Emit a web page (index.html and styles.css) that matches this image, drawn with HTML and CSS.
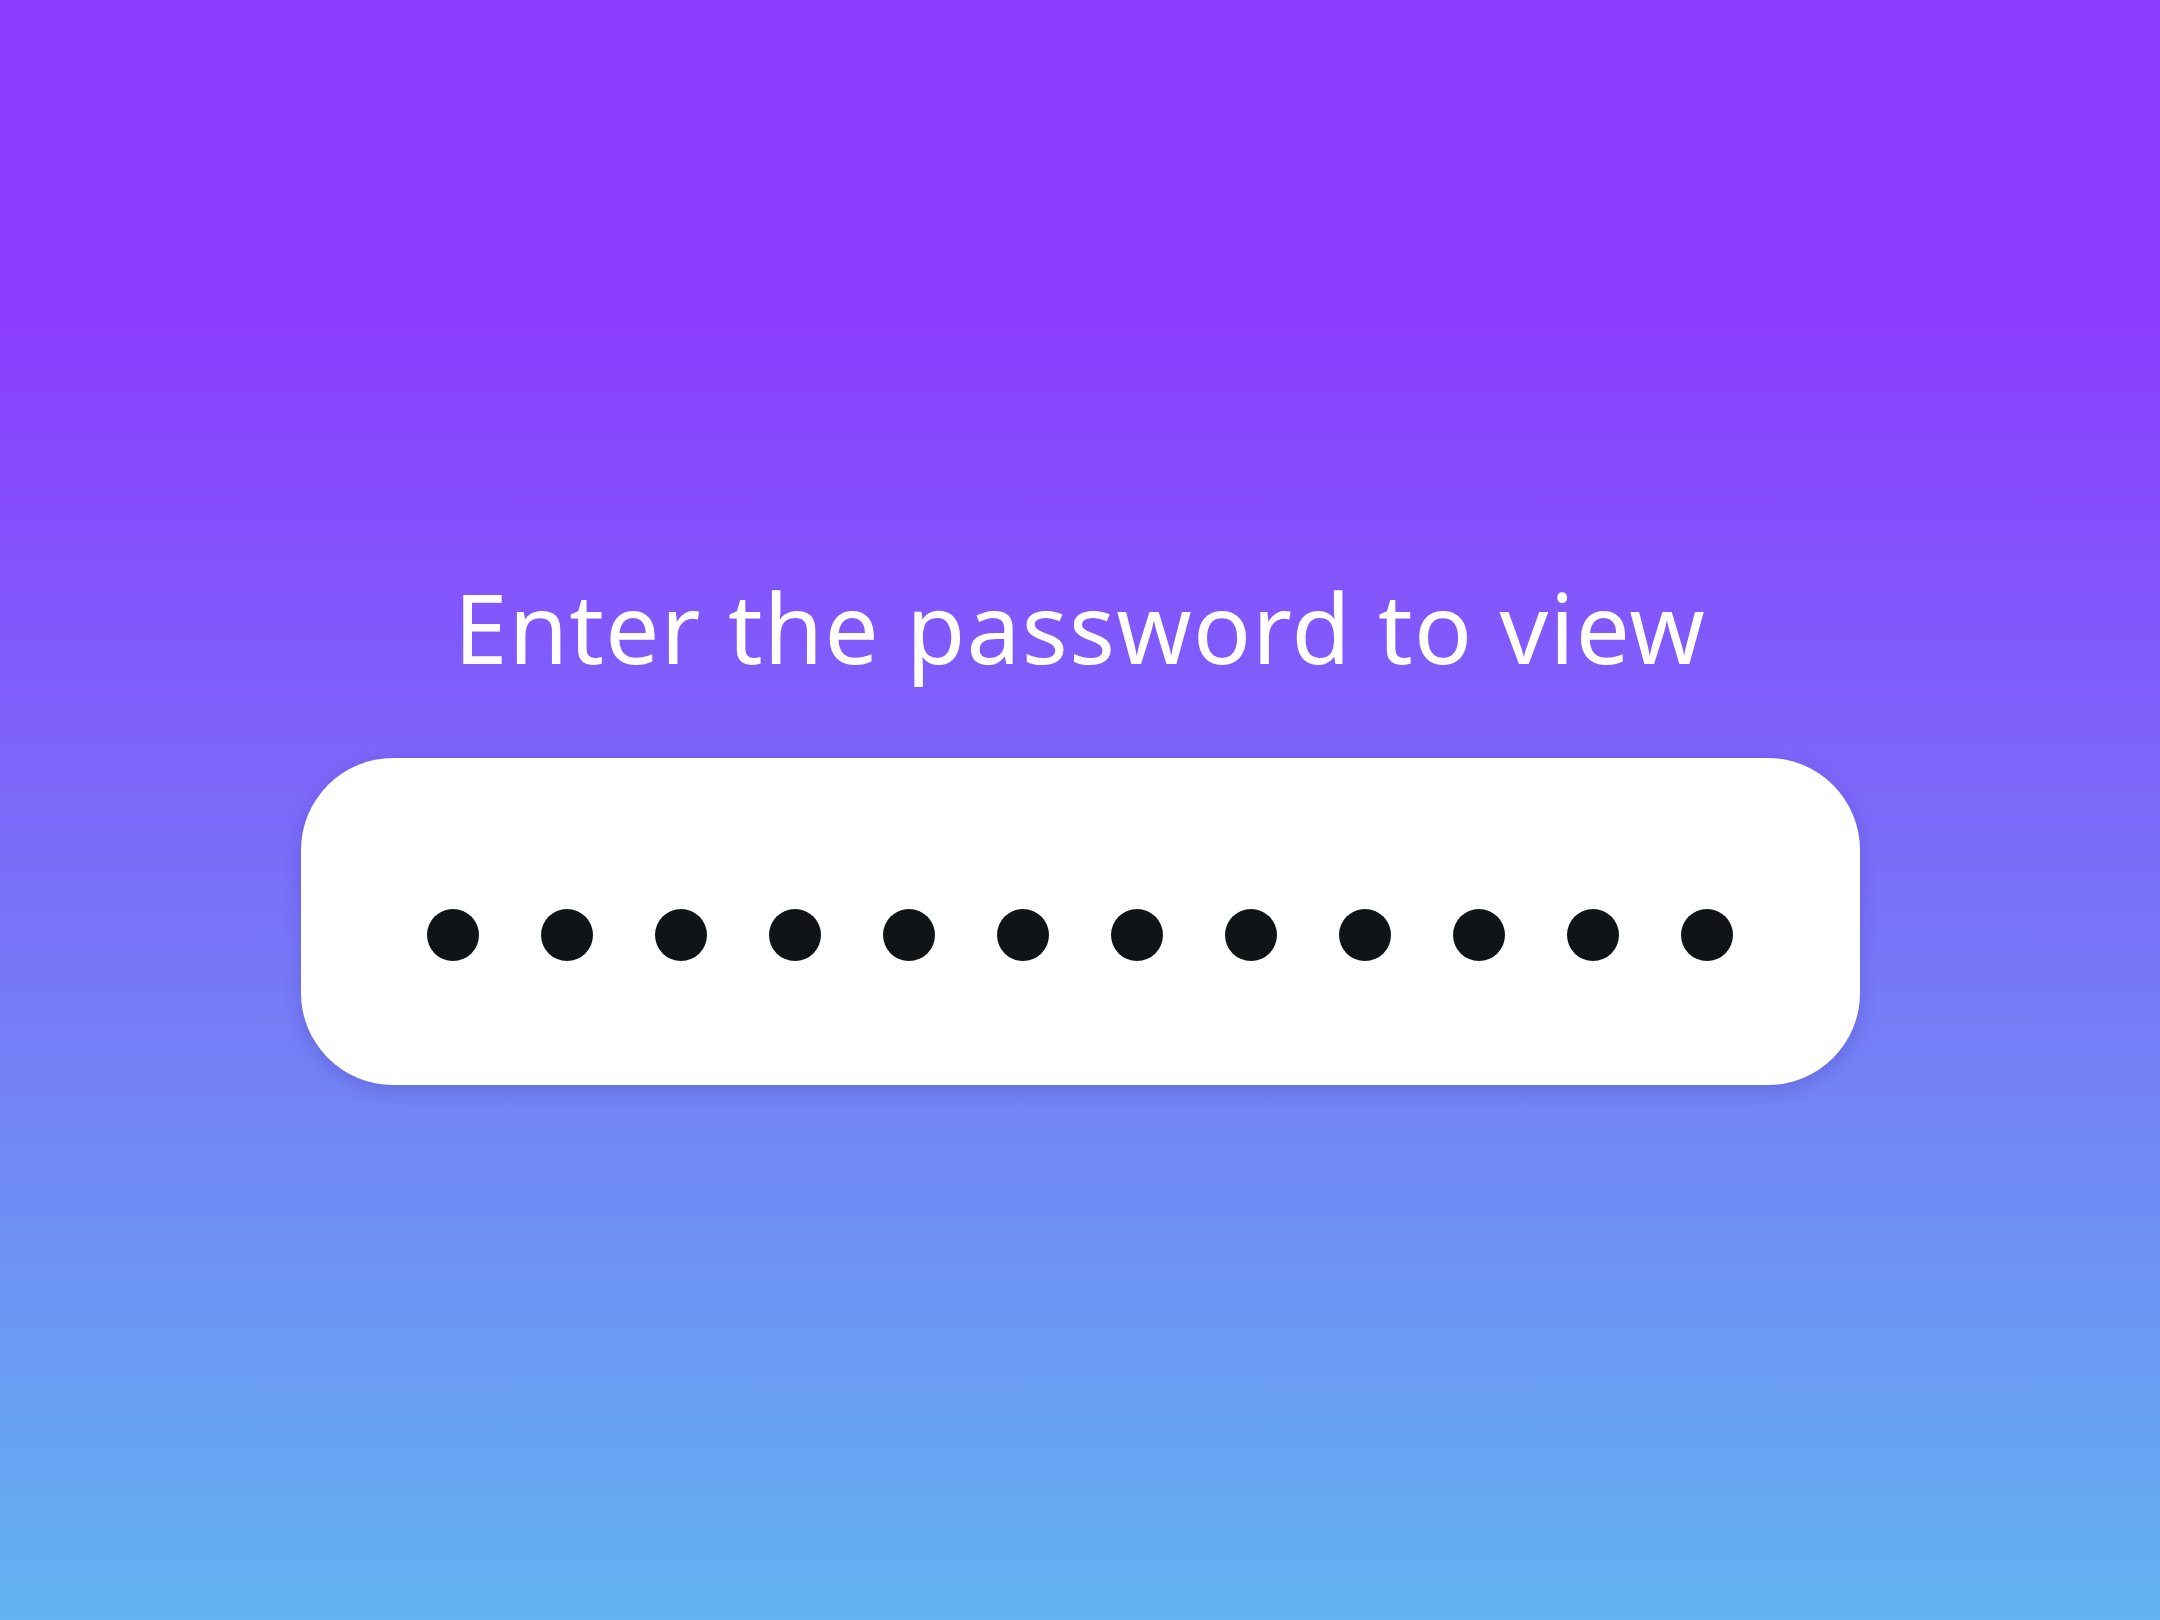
FILE: index.html
```html
<!DOCTYPE html>
<html lang="en">
<head>
  <meta charset="UTF-8">
  <meta name="viewport" content="width=device-width, initial-scale=1.0">
  <title>Protected</title>
  <link rel="stylesheet" href="styles.css">
</head>
<body>
  <div class="screen">
    <h1 class="prompt">Enter the password to view</h1>
    <div class="field">
      <div class="dots">
        <span class="dot"></span>
        <span class="dot"></span>
        <span class="dot"></span>
        <span class="dot"></span>
        <span class="dot"></span>
        <span class="dot"></span>
        <span class="dot"></span>
        <span class="dot"></span>
        <span class="dot"></span>
        <span class="dot"></span>
        <span class="dot"></span>
        <span class="dot"></span>
      </div>
    </div>
  </div>
</body>
</html>
```

FILE: styles.css
```css
:root {
  --purple: #8b3dff;
  --sky: #62b3f0;
  --ink: #101417;
}
* { box-sizing: border-box; }
html, body {
  margin: 0;
  height: 100%;
}
body {
  font-family: "Noto Sans", "Open Sans", sans-serif;
  background: linear-gradient(180deg, var(--purple) 20%, var(--sky) 100%);
}
.screen {
  min-height: 100%;
  display: flex;
  flex-direction: column;
  align-items: center;
  padding-top: 569px;
}
.prompt {
  margin: 0 0 74px;
  font-size: 96px;
  line-height: 1.2;
  font-weight: 400;
  letter-spacing: 1.3px;
  color: #fff;
}
.field {
  width: 1559px;
  height: 327px;
  background: #fff;
  border-radius: 92px;
  box-shadow: 0 6px 18px rgba(50, 40, 140, 0.22);
}
.dots {
  height: 100%;
  display: flex;
  align-items: center;
  justify-content: center;
  gap: 62px;
  padding-top: 26px;
}
.dot {
  width: 52px;
  height: 52px;
  border-radius: 50%;
  background: var(--ink);
}
```
